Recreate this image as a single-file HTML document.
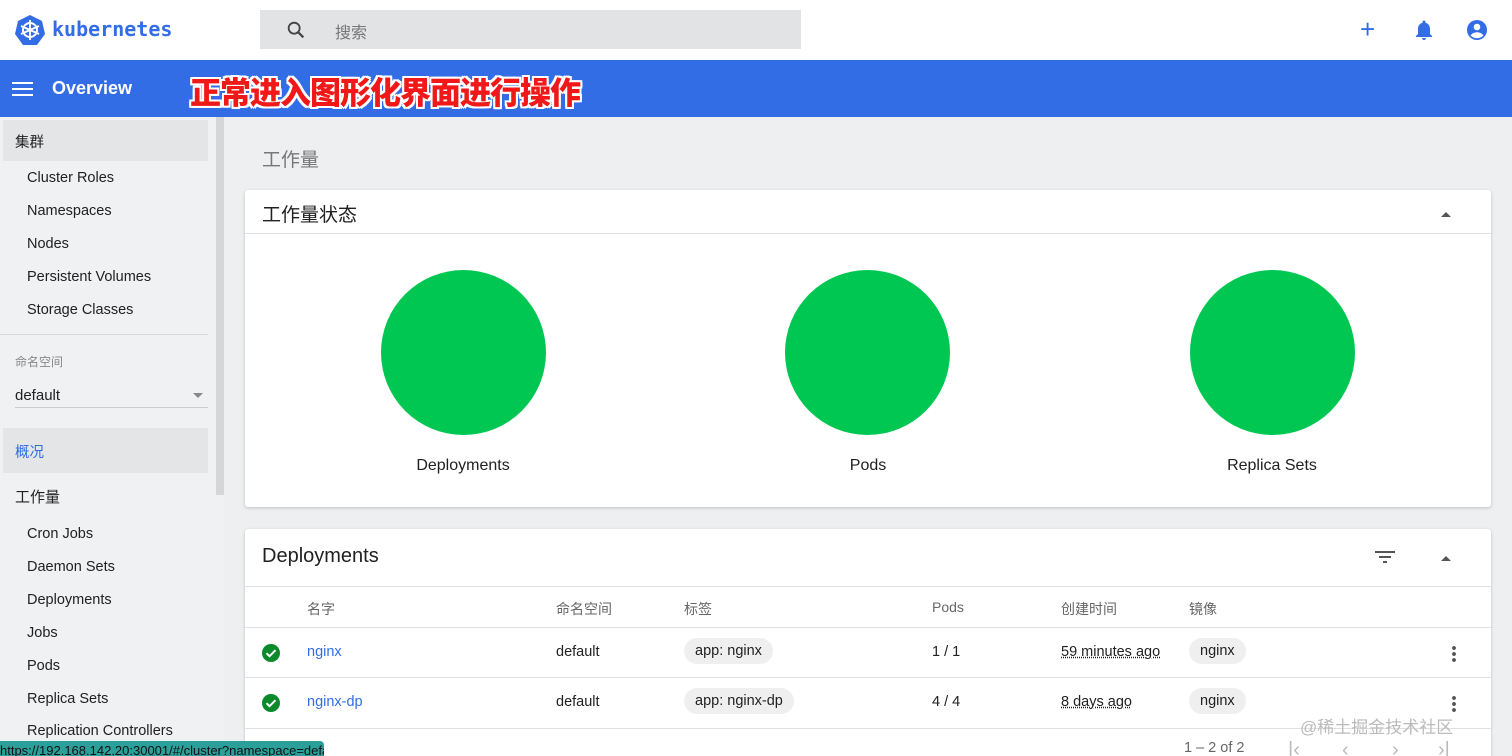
<!DOCTYPE html>
<html style="overflow:hidden;width:1512px;height:756px"><head><meta charset="utf-8"><style>
*{box-sizing:border-box;margin:0;padding:0}
body{width:1512px;height:756px;overflow:hidden;background:#eeeff0;font-family:"Liberation Sans","Noto Sans CJK SC",sans-serif;color:#212121;position:relative}
.abs{position:absolute;white-space:nowrap}
.top{left:0;top:0;width:1512px;height:60px;background:#fff}
.bar{left:0;top:60px;width:1512px;height:57px;background:#326de6}
.side{left:0;top:117px;width:224px;height:639px;background:#f0f1f2}
.si{position:absolute;left:27px;font-size:14.5px;color:#212121;white-space:nowrap}
.card{background:#fff;box-shadow:0 1px 3px rgba(0,0,0,.2);border-radius:3px}
.circ{width:165px;height:165px;border-radius:50%;background:#00c752;position:absolute;top:80px}
.lbl{position:absolute;top:267px;font-size:16px;color:#212121;width:200px;text-align:center}
.th{position:absolute;top:70px;font-size:14px;color:#666}
.td{position:absolute;font-size:14.5px;color:#212121;white-space:nowrap}
.chip{position:absolute;background:#efefef;border-radius:14px;padding:5px 11px;font-size:14.5px;white-space:nowrap}
.hl{position:absolute;left:0;width:1246px;height:1px;background:#e0e0e0}
.pg{position:absolute;top:210px;font-size:20px;color:#bbb}
</style></head><body>
<div class="abs top"></div>
<svg class="abs" style="left:14px;top:14px" width="32" height="32" viewBox="0 0 32 32"><polygon points="16,1 28,7 31,20 23,31 9,31 1,20 4,7" fill="#326de6"/><circle cx="16" cy="16" r="7" fill="none" stroke="#fff" stroke-width="2"/><g stroke="#fff" stroke-width="1.8"><line x1="16" y1="6" x2="16" y2="26"/><line x1="7" y1="12" x2="25" y2="20"/><line x1="7" y1="20" x2="25" y2="12"/></g><circle cx="16" cy="16" r="2" fill="#fff"/></svg>
<div class="abs" style="left:52px;top:17px;font-family:'DejaVu Sans Mono','Liberation Mono',monospace;font-size:20px;font-weight:bold;color:#326de6">kubernetes</div>
<div class="abs" style="left:260px;top:10px;width:541px;height:39px;background:#e2e3e4"></div>
<svg class="abs" style="left:285px;top:19px" width="22" height="22" viewBox="0 0 24 24"><circle cx="10" cy="10" r="6" fill="none" stroke="#444" stroke-width="2"/><line x1="14.5" y1="14.5" x2="20" y2="20" stroke="#444" stroke-width="2.4"/></svg>
<div class="abs" style="left:335px;top:19px;font-size:16px;color:#777">搜索</div>
<div class="abs" style="left:1360px;top:14px;font-size:26px;color:#326de6;line-height:30px">+</div>
<svg class="abs" style="left:1412px;top:18px" width="24" height="24" viewBox="0 0 24 24"><path d="M12 22c1.1 0 2-.9 2-2h-4c0 1.1.9 2 2 2zm6-6v-5c0-3.1-1.6-5.6-4.5-6.3V4c0-.8-.7-1.5-1.5-1.5s-1.5.7-1.5 1.5v.7C7.6 5.4 6 7.9 6 11v5l-2 2v1h16v-1l-2-2z" fill="#326de6"/></svg>
<svg class="abs" style="left:1465px;top:18px" width="24" height="24" viewBox="0 0 24 24"><circle cx="12" cy="12" r="10" fill="#326de6"/><circle cx="12" cy="9" r="3.3" fill="#fff"/><path d="M5.5 17.5c1.5-2.3 4-3.3 6.5-3.3s5 1 6.5 3.3c-1.7 1.8-4 2.7-6.5 2.7s-4.8-.9-6.5-2.7z" fill="#fff"/></svg>
<div class="abs bar"></div>
<svg class="abs" style="left:12px;top:80px" width="22" height="18"><g fill="#fff"><rect y="2" width="21" height="2"/><rect y="8" width="21" height="2"/><rect y="14" width="21" height="2"/></g></svg>
<div class="abs" style="left:52px;top:78px;font-size:18px;font-weight:bold;color:#fff">Overview</div>
<div class="abs" style="left:190px;top:68px;font-size:31px;font-weight:900;color:#f01818;letter-spacing:-1px;text-shadow:2px 0 #fff,-2px 0 #fff,0 2px #fff,0 -2px #fff,2px 2px #fff,-2px -2px #fff,2px -2px #fff,-2px 2px #fff">正常进入图形化界面进行操作</div>
<div class="abs side">
<div class="abs" style="left:3px;top:3px;width:205px;height:41px;background:#e4e5e6"></div>
<div class="si" style="left:15px;top:14px">集群</div>
<div class="si" style="top:53px">Cluster Roles</div>
<div class="si" style="top:86px">Namespaces</div>
<div class="si" style="top:119px">Nodes</div>
<div class="si" style="top:152px">Persistent Volumes</div>
<div class="si" style="top:185px">Storage Classes</div>
<div class="abs" style="left:0;top:217px;width:208px;height:1px;background:#d8d8d8"></div>
<div class="si" style="left:15px;top:236px;font-size:12px;color:#888">命名空间</div>
<div class="si" style="left:15px;top:270px;font-size:15px">default</div>
<div class="abs" style="left:193px;top:276px;border:5px solid transparent;border-top:5px solid #888"></div>
<div class="abs" style="left:15px;top:290px;width:193px;height:1px;background:#ccc"></div>
<div class="abs" style="left:3px;top:311px;width:205px;height:45px;background:#e4e5e6"></div>
<div class="si" style="left:15px;top:324px;color:#326de6">概况</div>
<div class="si" style="left:15px;top:369px;font-size:15px">工作量</div>
<div class="si" style="top:409px">Cron Jobs</div>
<div class="si" style="top:442px">Daemon Sets</div>
<div class="si" style="top:475px">Deployments</div>
<div class="si" style="top:508px">Jobs</div>
<div class="si" style="top:541px">Pods</div>
<div class="si" style="top:574px">Replica Sets</div>
<div class="si" style="top:606px">Replication Controllers</div>
<div class="abs" style="left:216px;top:0;width:8px;height:378px;background:#d5d6d7"></div>
</div>
<div class="abs" style="left:262px;top:145px;font-size:19px;color:#777">工作量</div>
<div class="abs card" style="left:245px;top:190px;width:1246px;height:317px">
<div class="abs" style="left:17px;top:10px;font-size:19px">工作量状态</div>
<div class="abs" style="left:1196px;top:17px;border:5px solid transparent;border-bottom:5px solid #555"></div>
<div class="hl" style="top:43px"></div>
<div class="circ" style="left:136px"></div><div class="lbl" style="left:118px">Deployments</div>
<div class="circ" style="left:540px"></div><div class="lbl" style="left:523px">Pods</div>
<div class="circ" style="left:945px"></div><div class="lbl" style="left:927px">Replica Sets</div>
</div>
<div class="abs card" style="left:245px;top:529px;width:1246px;height:240px">
<div class="abs" style="left:17px;top:16px;font-size:20px">Deployments</div>
<svg class="abs" style="left:1129px;top:19px" width="22" height="18"><g fill="#555"><rect x="1" y="3" width="20" height="2"/><rect x="5" y="8" width="12" height="2"/><rect x="9" y="13" width="4" height="2"/></g></svg>
<div class="abs" style="left:1196px;top:22px;border:5px solid transparent;border-bottom:5px solid #555"></div>
<div class="hl" style="top:57px"></div>
<div class="th" style="left:62px">名字</div><div class="th" style="left:311px">命名空间</div><div class="th" style="left:439px">标签</div><div class="th" style="left:687px">Pods</div><div class="th" style="left:816px">创建时间</div><div class="th" style="left:944px">镜像</div>
<div class="hl" style="top:98px"></div>
<div class="hl" style="top:148px"></div>
<div class="hl" style="top:199px"></div>
<svg class="abs" style="left:17px;top:115px" width="18" height="18"><circle cx="9" cy="9" r="9" fill="#0a8a2a"/><path d="M4.5 9.2l3 3 6-6" stroke="#fff" stroke-width="2" fill="none"/></svg>
<svg class="abs" style="left:17px;top:165px" width="18" height="18"><circle cx="9" cy="9" r="9" fill="#0a8a2a"/><path d="M4.5 9.2l3 3 6-6" stroke="#fff" stroke-width="2" fill="none"/></svg>
<div class="td" style="left:62px;top:115px;color:#326de6">nginx</div>
<div class="td" style="left:62px;top:165px;color:#326de6">nginx-dp</div>
<div class="td" style="left:311px;top:115px">default</div><div class="td" style="left:311px;top:165px">default</div>
<div class="chip" style="left:439px;top:109px">app: nginx</div><div class="chip" style="left:439px;top:159px">app: nginx-dp</div>
<div class="td" style="left:687px;top:115px">1 / 1</div><div class="td" style="left:687px;top:165px">4 / 4</div>
<div class="td" style="left:816px;top:115px;text-decoration:underline dotted">59 minutes ago</div>
<div class="td" style="left:816px;top:165px;text-decoration:underline dotted">8 days ago</div>
<div class="chip" style="left:944px;top:109px">nginx</div><div class="chip" style="left:944px;top:159px">nginx</div>
<div class="abs" style="left:1207px;top:116px;width:4px;height:18px;background:radial-gradient(circle,#555 1.8px,transparent 2px) 0 0/4px 6px"></div>
<div class="abs" style="left:1207px;top:166px;width:4px;height:18px;background:radial-gradient(circle,#555 1.8px,transparent 2px) 0 0/4px 6px"></div>
<div class="td" style="left:939px;top:211px;color:#666">1 – 2 of 2</div>
<div class="pg" style="left:1043px">|‹</div>
<div class="pg" style="left:1097px">‹</div>
<div class="pg" style="left:1147px">›</div>
<div class="pg" style="left:1193px">›|</div>
</div>
<div class="abs" style="left:1300px;top:713px;font-size:17px;color:#bbb">@稀土掘金技术社区</div>
<div class="abs" style="left:0;top:741px;width:324px;height:15px;background:#2ba09a;border-radius:0 4px 0 0;color:#111;font-size:13px;padding:2px 0 0 0;overflow:hidden">https://192.168.142.20:30001/#/cluster?namespace=default</div>
</body></html>
